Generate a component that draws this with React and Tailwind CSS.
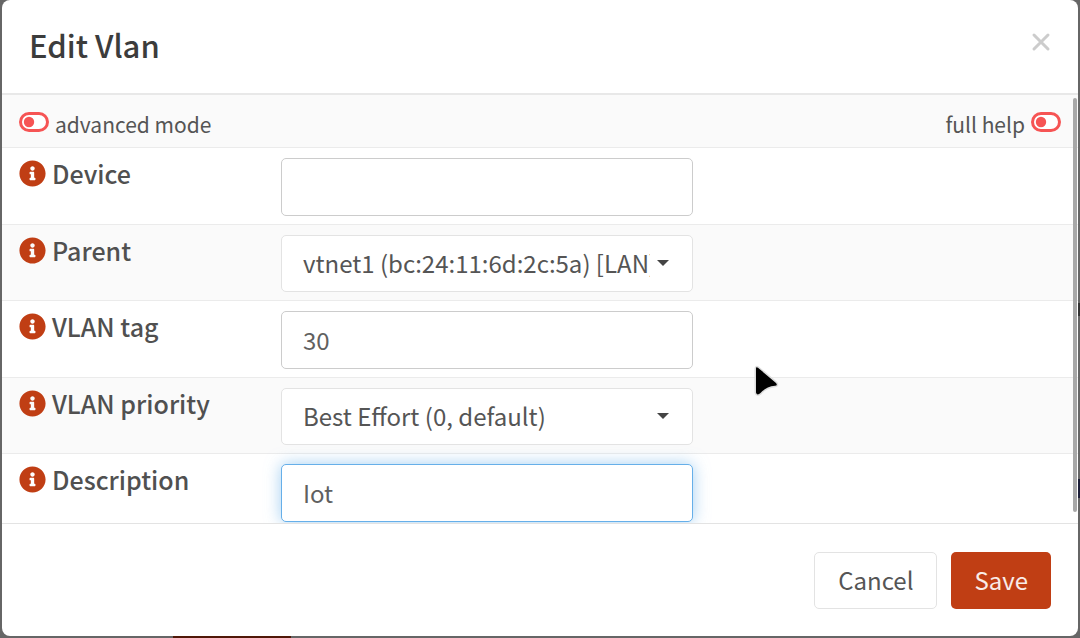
import { useState } from 'react';
import { FaInfoCircle } from 'react-icons/fa';

const fields = [
  { id: 'device', label: 'Device', type: 'text', value: '' },
  {
    id: 'parent',
    label: 'Parent',
    type: 'select',
    value: 'vtnet1 (bc:24:11:6d:2c:5a) [LAN]',
  },
  { id: 'tag', label: 'VLAN tag', type: 'text', value: '30' },
  {
    id: 'priority',
    label: 'VLAN priority',
    type: 'select',
    value: 'Best Effort (0, default)',
  },
  { id: 'description', label: 'Description', type: 'text', value: 'Iot', active: true },
];

function ToggleOff() {
  return (
    <svg width="30" height="20" viewBox="0 0 30 20" aria-hidden="true">
      <rect x="1.5" y="1.5" width="27" height="17" rx="8.5" fill="#fff" stroke="#f65454" strokeWidth="3" />
      <circle cx="10" cy="10" r="5.2" fill="#f65454" />
    </svg>
  );
}

function Caret() {
  return (
    <svg
      className="pointer-events-none absolute top-[25px] right-6"
      width="12"
      height="6"
      viewBox="0 0 12 6"
      aria-hidden="true"
    >
      <path d="M0 0h12L6 6z" fill="#444" />
    </svg>
  );
}

function Field({ field }) {
  const [value, setValue] = useState(field.value);
  const onChange = (e) => setValue(e.target.value);

  return (
    <div className="grid grid-cols-[262px_minmax(0,412px)] border-t border-[#ebebeb] px-[17px] pt-[10px] pb-2 odd:bg-white even:bg-[#fafafa]">
      <div className="flex h-[30px] items-center gap-[6px]">
        <FaInfoCircle className="size-[27px] shrink-0 text-[#c03e14]" />
        <label htmlFor={field.id} className="text-[25px] leading-8 font-medium text-[#505050]">
          {field.label}
        </label>
      </div>
      {field.type === 'select' ? (
        <div className="relative">
          <select
            id={field.id}
            value={value}
            onChange={onChange}
            className="h-[57px] w-full appearance-none rounded-[5px] border border-[#e3e3e3] bg-white pr-[42px] pb-[2px] pl-[21px] text-2xl text-[#555] outline-none"
          >
            <option>{field.value}</option>
          </select>
          <Caret />
        </div>
      ) : (
        <input
          id={field.id}
          type="text"
          value={value}
          onChange={onChange}
          className={`h-[58px] w-full rounded-[5px] border bg-white px-[21px] pb-[2px] text-2xl text-[#606060] outline-none ${
            field.active
              ? 'border-[#66afe9] shadow-[0_0_16px_rgba(102,175,233,0.6)]'
              : 'border-[#ccc]'
          }`}
        />
      )}
    </div>
  );
}

function Pointer() {
  return (
    <svg
      className="pointer-events-none absolute top-[364px] left-[753px]"
      width="27"
      height="35"
      viewBox="0 0 27 35"
      aria-hidden="true"
    >
      <path
        d="M3 4.500Q3 2.500 5 3.800L23 19Q25 21.500 22 21.700Q13 22.500 7.500 29Q4 32 3 28.500Z"
        fill="#000"
        stroke="#ddd"
        strokeWidth="3"
        strokeLinejoin="round"
        paintOrder="stroke"
      />
    </svg>
  );
}

function App() {
  return (
    <div className="relative flex h-screen flex-col overflow-hidden bg-[#666] px-[2px] pb-[2px] font-['Noto_Sans_CJK_SC',sans-serif] text-[#555]">
      {/* parts of the page behind the dialog */}
      <div className="absolute bottom-0 left-[173px] h-[3px] w-[118px] bg-[#501808]" />
      <div className="absolute top-[479px] right-0 h-[19px] w-[3px] bg-[#1c1e38]" />
      <div className="absolute top-[303px] right-0 h-[13px] w-[3px] bg-[#333]" />

      <div
        role="dialog"
        aria-labelledby="title"
        className="relative flex min-h-0 flex-1 flex-col overflow-hidden rounded-lg bg-white"
      >
        <header className="flex h-[95px] shrink-0 justify-between border-b-2 border-[#e8e8e8] px-[27px] pt-[26px]">
          <h1 id="title" className="text-[31px] leading-[38px] font-medium text-[#3c3c3c]">
            Edit Vlan
          </h1>
          <button type="button" aria-label="Close" className="h-8">
            <svg width="20" height="20" viewBox="0 0 20 20" aria-hidden="true">
              <path d="M3 3l14 14M17 3L3 17" stroke="#ccc" strokeWidth="3" strokeLinecap="round" />
            </svg>
          </button>
        </header>

        <div className="relative min-h-0 flex-1 overflow-hidden">
          <div className="flex h-[52px] items-start justify-between bg-[#fafafa] px-[17px] pt-[17px] text-[21px] leading-6">
            <button type="button" className="flex items-start gap-[6px]">
              <ToggleOff />
              advanced mode
            </button>
            <button type="button" className="flex items-start gap-[6px]">
              full help
              <ToggleOff />
            </button>
          </div>
          <form>
            {fields.map((field) => (
              <Field key={field.id} field={field} />
            ))}
          </form>
          <div className="absolute top-[3px] right-[1px] bottom-[11px] w-1 rounded-full bg-[#a8a8a8]" />
        </div>

        <footer className="flex h-[113px] shrink-0 items-center justify-end gap-[14px] border-t border-[#e3e3e3] px-[27px] text-2xl">
          <button type="button" className="h-[57px] rounded-[5px] border border-[#e3e3e3] bg-white px-[23px]">
            Cancel
          </button>
          <button type="button" className="h-[57px] rounded-[5px] bg-[#c03e14] px-[23px] text-white/90">
            Save
          </button>
        </footer>
      </div>
      <Pointer />
    </div>
  );
}

export default App;
